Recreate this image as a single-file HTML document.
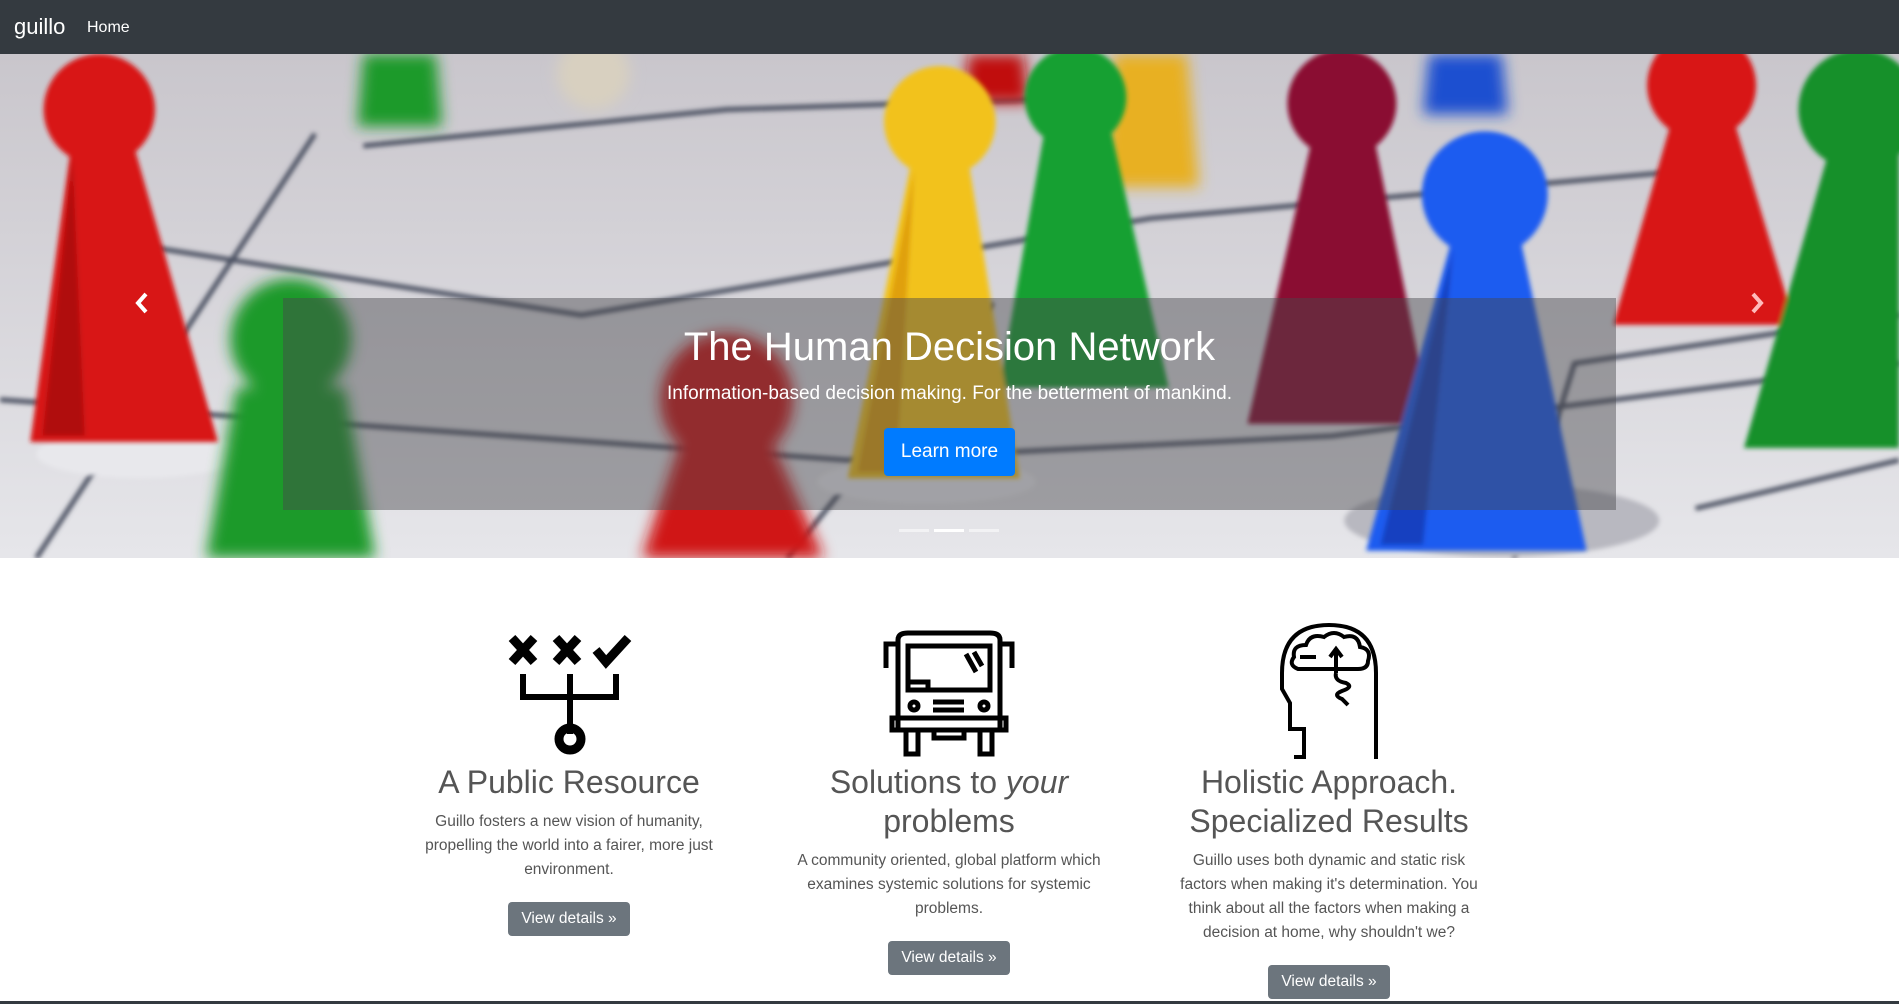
<!DOCTYPE html>
<html><head><meta charset="utf-8"><style>
*{margin:0;padding:0;box-sizing:border-box}
body{width:1899px;height:1004px;overflow:hidden;font-family:"Liberation Sans",sans-serif;background:#fff;position:relative}
.nav{position:absolute;left:0;top:0;width:1899px;height:54px;background:#343a40}
.brand{position:absolute;left:14px;top:14px;font-size:22px;color:#fff}
.home{position:absolute;left:87px;top:19px;font-size:16px;color:#fff}
.hero{position:absolute;left:0;top:54px;width:1899px;height:504px;overflow:hidden}
.cap{position:absolute;left:283px;top:298px;width:1333px;height:212px;background:rgba(70,70,75,.45);text-align:center;color:#fff}
.cap h1{font-weight:400;font-size:40px;margin-top:27px}
.cap p{font-size:19px;margin-top:13px}
.btn{display:inline-block;background:#007bff;color:#fff;font-size:19px;border-radius:4px;padding:13px 17px;margin-top:23px}
.ind{position:absolute;top:529px;height:3px;width:30px;background:rgba(255,255,255,.5)}
.col{position:absolute;width:320px;text-align:center;color:#555}
.col h2{font-weight:400;font-size:32px;line-height:39px;color:#555}
.col p{font-size:15.5px;line-height:24px;margin-top:8px}
.vb{display:inline-block;background:#6c757d;color:#fff;font-size:15.5px;padding:8px 13px;border-radius:4px;margin-top:20px}
.ic{position:absolute}
</style></head><body>
<div class="nav"><div class="brand">guillo</div><div class="home">Home</div></div>
<div class="hero">
<svg width="1899" height="504" viewBox="0 44 1568 417" preserveAspectRatio="none">
<defs><filter id="b"><feGaussianBlur stdDeviation="6"/></filter><filter id="s"><feGaussianBlur stdDeviation="2"/></filter>
<linearGradient id="bg" x1="0" y1="0" x2="0" y2="1"><stop offset="0" stop-color="#c9c6cc"/><stop offset="1" stop-color="#e6e6ea"/></linearGradient></defs>
<rect x="0" y="44" width="1568" height="417" fill="url(#bg)"/>
<g stroke="#4a4f60" stroke-width="4" fill="none" filter="url(#s)">
<path d="M0 330 L700 380 L1100 360 L1568 300"/><path d="M30 461 L260 110"/><path d="M100 200 L480 260 L950 180 L1400 140"/>
<path d="M650 461 L820 250"/><path d="M1250 461 L1300 300 L1568 260"/><path d="M300 120 L600 90 L900 80"/><path d="M1400 420 L1568 380"/>
</g>
<g filter="url(#s)">
<ellipse cx="115" cy="375" rx="85" ry="20" fill="#e8e8ec"/><ellipse cx="765" cy="398" rx="90" ry="18" fill="#ececf0"/>
<ellipse cx="1240" cy="430" rx="130" ry="30" fill="#b8b8c0"/>
</g>
<g filter="url(#b)">
<path d="M300 44 h60 l5 60 h-70z" fill="#1f9a2a"/>
<circle cx="490" cy="60" r="30" fill="#d8d0c0"/>
<path d="M800 44 h45 l5 40 h-55z" fill="#c01010"/>
<path d="M920 44 h60 l10 110 h-80z" fill="#e8b020"/>
<path d="M1180 44 h60 l5 50 h-70z" fill="#1b4fd0"/>
<circle cx="240" cy="280" r="50" fill="#1f9a2a"/><path d="M195 320 L170 461 L310 461 L285 320z" fill="#1f9a2a"/>
<circle cx="600" cy="330" r="55" fill="#d01616"/><path d="M560 370 L530 461 L680 461 L640 370z" fill="#d01616"/>
</g>
<g filter="url(#s)">
<circle cx="82" cy="90" r="46" fill="#d81818"/><path d="M58 125 L25 365 L180 365 L112 125z" fill="#d81818"/><path d="M60 130 L35 360 L70 360z" fill="#b01010"/>
<circle cx="888" cy="80" r="42" fill="#19a030"/><path d="M862 110 L825 320 L965 320 L918 110z" fill="#19a030"/>
<circle cx="776" cy="100" r="46" fill="#f2c21c"/><path d="M752 135 L700 395 L842 395 L800 135z" fill="#f2c21c"/><path d="M755 140 L708 390 L740 390z" fill="#e0a010"/>
<circle cx="1108" cy="85" r="45" fill="#8a1030"/><path d="M1082 120 L1030 350 L1182 350 L1136 120z" fill="#8a1030"/>
<circle cx="1226" cy="160" r="52" fill="#1d5cf0"/><path d="M1198 200 L1128 455 L1310 455 L1256 200z" fill="#1d5cf0"/><path d="M1200 205 L1140 450 L1175 450z" fill="#1240c0"/>
<circle cx="1405" cy="70" r="45" fill="#d81818"/><path d="M1380 100 L1332 268 L1482 268 L1432 100z" fill="#d81818"/>
<circle cx="1535" cy="90" r="50" fill="#14902a"/><path d="M1510 125 L1440 370 L1568 370 L1568 125z" fill="#14902a"/>
</g>
</svg>
<svg style="position:absolute;left:134px;top:238px" width="16" height="22" viewBox="0 0 16 22"><path d="M12 2 L4 11 L12 20" stroke="#fff" stroke-width="4" fill="none"/></svg>
<svg style="position:absolute;left:1749px;top:238px" width="16" height="22" viewBox="0 0 16 22"><path d="M4 2 L12 11 L4 20" stroke="#fbb" stroke-width="4" fill="none"/></svg>
</div>
<div class="cap"><h1>The Human Decision Network</h1><p>Information-based decision making. For the betterment of mankind.</p><span class="btn">Learn more</span></div>
<div class="ind" style="left:899px"></div><div class="ind" style="left:934px;background:#fff"></div><div class="ind" style="left:969px"></div>

<svg class="ic" style="left:508px;top:634px" width="124" height="122" viewBox="0 0 124 122" fill="none" stroke="#000">
<path d="M4 4 L26 28 M26 4 L4 28 M48 4 L70 28 M70 4 L48 28" stroke-width="9"/>
<path d="M88 16 L98 28 L120 4" stroke-width="9"/>
<path d="M15 40 V63 H108 V40 M62 40 V100" stroke-width="6"/>
<circle cx="62" cy="105" r="11" stroke-width="9"/>
</svg>
<svg class="ic" style="left:878px;top:630px" width="142" height="128" viewBox="0 0 142 128" fill="none" stroke="#000" stroke-width="5">
<path d="M20 10 Q20 3 30 3 H112 Q122 3 122 10 V100 H20 Z"/>
<path d="M20 14 H8 V38 M122 14 H134 V38"/>
<path d="M30 16 H112 V60 H30 Z"/>
<path d="M88 24 L98 42 M96 22 L104 36"/>
<path d="M30 52 H50 V60"/>
<circle cx="36" cy="76" r="4"/><circle cx="106" cy="76" r="4"/><path d="M55 72 H86 M55 80 H86"/>
<path d="M14 88 H128 V100 H14 Z"/><path d="M56 100 V108 H86 V100"/>
<path d="M28 100 V124 H40 V100 M102 100 V124 H114 V100"/>
</svg>
<svg class="ic" style="left:1276px;top:621px" width="106" height="140" viewBox="0 0 106 140" fill="none" stroke="#000" stroke-width="4">
<path d="M100 138 V52 Q100 4 53 4 Q6 4 6 52 V68 L14 82 V108 H28 V136 H18"/>
<path d="M18 36 Q16 24 30 24 Q34 12 48 16 Q58 8 68 16 Q82 12 84 26 Q96 28 92 40 Q92 48 82 48 H22 Q12 44 18 36 Z"/>
<path d="M24 36 H40 M60 52 V30 M54 36 L60 28 L66 36"/>
<path d="M60 52 Q58 60 70 62 Q78 66 66 70 Q56 74 66 78 L72 84"/>
</svg>

<div class="col" style="left:409px;top:763px"><h2>A Public Resource</h2><p>Guillo fosters a new vision of humanity, propelling the world into a fairer, more just environment.</p><span class="vb">View details »</span></div>
<div class="col" style="left:789px;top:763px"><h2>Solutions to <i>your</i> problems</h2><p>A community oriented, global platform which examines systemic solutions for systemic problems.</p><span class="vb">View details »</span></div>
<div class="col" style="left:1169px;top:763px"><h2>Holistic Approach. Specialized Results</h2><p>Guillo uses both dynamic and static risk factors when making it's determination. You think about all the factors when making a decision at home, why shouldn't we?</p><span class="vb">View details »</span></div>
<div style="position:absolute;left:0;top:1001px;width:1899px;height:3px;background:#343a40"></div>
</body></html>
